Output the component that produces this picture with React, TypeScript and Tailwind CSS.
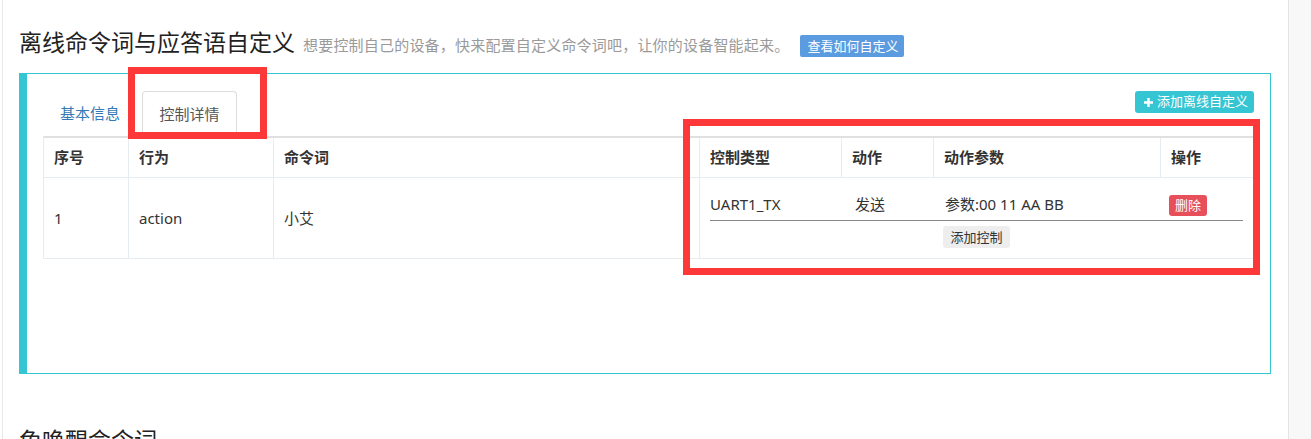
const headCols = ['序号', '行为', '命令词', '控制类型', '动作', '动作参数', '操作'];

function PlusIcon() {
  return (
    <svg width="9" height="9" viewBox="0 0 9 9" className="shrink-0">
      <path d="M3.3 0h2.4v3.3H9v2.4H5.7V9H3.3V5.7H0V3.3h3.3z" fill="white" />
    </svg>
  );
}

export default function App() {
  return (
    <div className="relative flex h-[439px] w-full overflow-hidden bg-white font-['Noto_Sans','Noto_Sans_CJK_SC',sans-serif] text-[#333]">
      <div className="w-[2px]" />
      <div className="flex-1 border-l border-[#e8e8e8] pl-[16px] pr-[17px]">
        {/* title */}
        <div className="flex items-baseline pt-[27px]">
          <h1 className="text-[23px] leading-[30px] text-[#222]">离线命令词与应答语自定义</h1>
          <span className="ml-[8px] text-[15px] leading-[20px] tracking-[0.2px] text-[#9a9a9a]">
            想要控制自己的设备，快来配置自定义命令词吧，让你的设备智能起来。
          </span>
          <span className="ml-[11px] inline-block rounded-[2px] bg-[#5b9bdf] pl-[7px] pr-[6px] text-[13px] leading-[22px] text-white">
            查看如何自定义
          </span>
        </div>

        {/* panel */}
        <div className="mt-[16px] h-[301px] border border-l-[8px] border-[#36c6d3] px-[16px] pt-[17px]">
          <div className="flex items-start justify-between">
            <div className="flex text-[15px]">
              <div className="flex h-[45px] w-[99px] items-center pl-[17px] text-[#337ab7]">基本信息</div>
              <div className="flex h-[45px] w-[95px] items-center justify-center rounded-t-[4px] border border-b-0 border-[#ddd] text-[#555]">
                控制详情
              </div>
            </div>
            <button className="flex h-[22px] items-center gap-[4px] rounded-[3px] bg-[#36c6d3] pl-[9px] pr-[6px] text-[13px] text-white">
              <PlusIcon />
              添加离线自定义
            </button>
          </div>

          <div className="border-l border-t-2 border-l-[#e7ecf1] border-t-[#e0e0e0] text-[15px]">
            <div className="grid h-[40px] grid-cols-[85px_145px_426px_142px_92px_227px_93px] border-b border-[#e7ecf1] font-bold">
              {headCols.map(c => (
                <div key={c} className="flex items-center border-r border-[#e7ecf1] px-[10px]">
                  {c}
                </div>
              ))}
            </div>
            <div className="grid h-[81px] grid-cols-[85px_145px_426px_554px] border-b border-[#e7ecf1]">
              <div className="flex items-center border-r border-[#e7ecf1] px-[10px]">1</div>
              <div className="flex items-center border-r border-[#e7ecf1] px-[10px]">action</div>
              <div className="flex items-center border-r border-[#e7ecf1] px-[10px]">小艾</div>
              <div className="border-r border-[#e7ecf1] px-[10px] pt-[10px]">
                <div className="grid h-[33px] grid-cols-[144px_91px_224px_1fr] items-center border-b border-[#888]">
                  <span>UART1_TX</span>
                  <span className="pl-[1px]">发送</span>
                  <span>参数:00 11 AA BB</span>
                  <span>
                    <span className="inline-block rounded-[3px] bg-[#e7505a] px-[6px] text-[13px] leading-[21px] text-white">删除</span>
                  </span>
                </div>
                <div className="mt-[5px] flex justify-center">
                  <span className="inline-block rounded-[3px] bg-[#eee] px-[7px] text-[13px] leading-[22px] text-[#333]">添加控制</span>
                </div>
              </div>
            </div>
          </div>
        </div>

        <h2 className="mt-[51px] text-[23px] leading-[30px] text-[#222]">免唤醒命令词</h2>
      </div>
      <div className="w-[23px] border-l border-[#e4e4e4] bg-[#f8f8f8]" />

      {/* annotation boxes */}
      <div className="absolute left-[128px] top-[67px] h-[72px] w-[139px] border-[7px] border-[#fc3838]" />
      <div className="absolute left-[683px] top-[119px] h-[156px] w-[577px] border-[7px] border-[#fc3838]" />
    </div>
  );
}
